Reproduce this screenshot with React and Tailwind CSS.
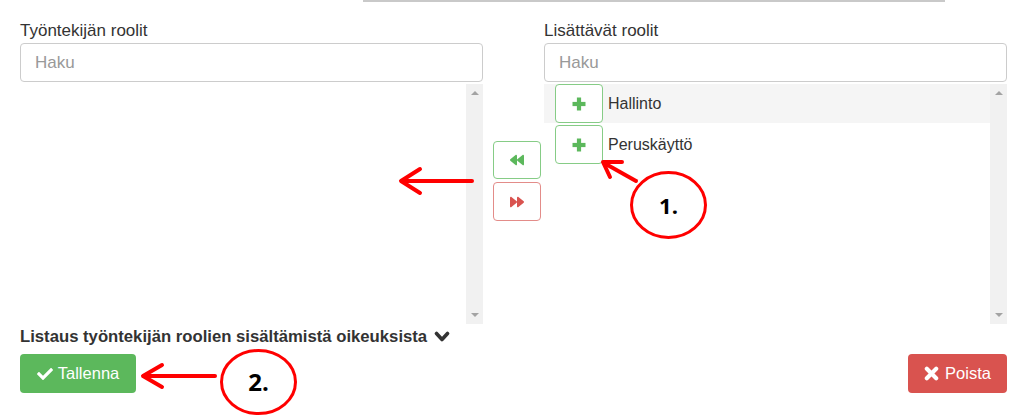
import React from "react";

const font = { fontFamily: '"Liberation Sans", Arial, sans-serif' };

function PlusIcon() {
  return (
    <svg viewBox="0 0 16 16" className="w-[16px] h-[16px]">
      <g stroke="#5cb85c" strokeWidth="4.2" strokeLinecap="butt">
        <line x1="1.5" y1="8" x2="14.5" y2="8" />
        <line x1="8" y1="1.5" x2="8" y2="14.5" />
      </g>
    </svg>
  );
}

function Backward({ color }) {
  return (
    <svg viewBox="0 0 512 512" className="w-[14px] h-[14px]" fill={color}>
      <path d="M11.5 280.6l192 160c20.6 17.2 52.5 2.8 52.5-24.6V96c0-27.4-31.9-41.8-52.5-24.6l-192 160c-15.3 12.8-15.3 36.4 0 49.2zm256 0l192 160c20.6 17.2 52.5 2.8 52.5-24.6V96c0-27.4-31.9-41.8-52.5-24.6l-192 160c-15.3 12.8-15.3 36.4 0 49.2z" />
    </svg>
  );
}

function Forward({ color }) {
  return (
    <svg viewBox="0 0 512 512" className="w-[14px] h-[14px]" fill={color}>
      <path d="M500.5 231.4l-192-160C287.9 54.3 256 68.6 256 96v320c0 27.4 31.9 41.8 52.5 24.6l192-160c15.3-12.8 15.3-36.4 0-49.2zm-256 0l-192-160C31.9 54.3 0 68.6 0 96v320c0 27.4 31.9 41.8 52.5 24.6l192-160c15.3-12.8 15.3-36.4 0-49.2z" />
    </svg>
  );
}

function Scrollbar() {
  return (
    <div className="w-[17px] h-full bg-[#f1f1f1] flex flex-col justify-between items-center py-[7px] shrink-0">
      <div className="w-0 h-0 border-l-[4px] border-r-[4px] border-b-[4px] border-l-transparent border-r-transparent border-b-[#a3a3a3]" />
      <div className="w-0 h-0 border-l-[4px] border-r-[4px] border-t-[4px] border-l-transparent border-r-transparent border-t-[#a3a3a3]" />
    </div>
  );
}

function SearchInput() {
  return (
    <div className="h-[39px] border border-[#cccccc] rounded-[4px] flex items-center pl-[14px] text-[17px] text-[#999999]">
      Haku
    </div>
  );
}

function RoleRow({ name, shaded }) {
  return (
    <div className={"h-[39px] flex items-center " + (shaded ? "bg-[#f5f5f5]" : "bg-white")}>
      <div className="ml-[11px] w-[48px] h-[39px] border border-[#86cc86] rounded-[4px] bg-white flex items-center justify-center">
        <PlusIcon />
      </div>
      <span className="ml-[5px] text-[16px] text-[#333333]">{name}</span>
    </div>
  );
}

export default function App() {
  return (
    <div className="relative w-[1024px] h-[417px] overflow-hidden bg-white" style={font}>
      <div className="ml-[363px] w-[582px] h-[2px] bg-[#c9c9c9]" />
      <div className="flex pl-[20px] pr-[17px] mt-[19px]">
        {/* left column */}
        <div className="w-[463px] flex flex-col">
          <div className="h-[20px] leading-[20px] text-[17px] text-[#333333] mb-[2px]">Työntekijän roolit</div>
          <SearchInput />
          <div className="mt-[2px] h-[240px] flex justify-end">
            <Scrollbar />
          </div>
        </div>
        {/* middle */}
        <div className="w-[61px] flex flex-col pt-[120px] pl-[10px] gap-[3px]">
          <div className="w-[48px] h-[38px] border border-[#86cc86] rounded-[4px] flex items-center justify-center">
            <Backward color="#5cb85c" />
          </div>
          <div className="w-[48px] h-[39px] border border-[#e38c89] rounded-[4px] flex items-center justify-center">
            <Forward color="#d9534f" />
          </div>
        </div>
        {/* right column */}
        <div className="w-[463px] flex flex-col">
          <div className="h-[20px] leading-[20px] text-[17px] text-[#333333] mb-[2px]">Lisättävät roolit</div>
          <SearchInput />
          <div className="mt-[2px] h-[240px] flex">
            <div className="flex-1 flex flex-col gap-[2px]">
              <RoleRow name="Hallinto" shaded />
              <RoleRow name="Peruskäyttö" />
            </div>
            <Scrollbar />
          </div>
        </div>
      </div>

      <div className="pl-[20px] mt-[3px] h-[20px] flex items-center text-[16.7px] font-bold text-[#333333]">
        <span>Listaus työntekijän roolien sisältämistä oikeuksista</span>
        <svg viewBox="0 0 16 12" className="ml-[7px] w-[16px] h-[12px]">
          <polyline points="2.5,2.5 8,8.5 13.5,2.5" fill="none" stroke="#333333" strokeWidth="3.6" strokeLinecap="round" strokeLinejoin="round" />
        </svg>
      </div>

      <div className="flex justify-between pl-[20px] pr-[17px] mt-[7px]">
        <div className="w-[116px] h-[39px] bg-[#5cb85c] rounded-[4px] flex items-center justify-center gap-[5px] text-white text-[16.5px]">
          <svg viewBox="0 0 512 512" className="w-[16px] h-[16px]" fill="#ffffff">
            <path d="M173.898 439.404l-166.4-166.4c-9.997-9.997-9.997-26.206 0-36.204l36.203-36.204c9.997-9.998 26.207-9.998 36.204 0L192 312.69 432.095 72.596c9.997-9.997 26.207-9.997 36.204 0l36.203 36.204c9.997 9.997 9.997 26.206 0 36.204l-294.4 294.401c-9.998 9.997-26.207 9.997-36.204-.001z" />
          </svg>
          <span>Tallenna</span>
        </div>
        <div className="w-[99px] h-[39px] bg-[#d9534f] rounded-[4px] flex items-center justify-center gap-[6px] text-white text-[16.5px]">
          <svg viewBox="0 0 16 16" className="w-[15px] h-[15px]">
            <g stroke="#ffffff" strokeWidth="4.4" strokeLinecap="round">
              <line x1="3" y1="3" x2="13" y2="13" />
              <line x1="13" y1="3" x2="3" y2="13" />
            </g>
          </svg>
          <span>Poista</span>
        </div>
      </div>

      {/* annotations overlay */}
      <svg className="absolute left-0 top-0 pointer-events-none" width="1024" height="417" viewBox="0 0 1024 417">
        <g stroke="#ff0000" strokeWidth="4" fill="none" strokeLinecap="round" strokeLinejoin="round">
          <line x1="472" y1="181" x2="402" y2="181" />
          <polyline points="420,169 401,181 420,193" />
          <line x1="636" y1="181" x2="604" y2="163" />
          <polyline points="622,162 603,162 610,177" />
          <line x1="215" y1="376" x2="144" y2="376" />
          <polyline points="162,365 143,376 162,387" />
        </g>
        <g stroke="#ff0000" strokeWidth="3" fill="none">
          <ellipse cx="668.5" cy="205" rx="37" ry="32.5" />
          <ellipse cx="258.5" cy="382" rx="37" ry="31.5" />
        </g>
      </svg>
      <div className="absolute left-[630px] top-[172px] w-[77px] h-[66px] flex items-center justify-center text-[22px] font-bold text-black" style={{ fontFamily: '"Open Sans", "Liberation Sans", sans-serif' }}>
        1.
      </div>
      <div className="absolute left-[220px] top-[350px] w-[77px] h-[64px] flex items-center justify-center text-[24px] font-bold text-black" style={{ fontFamily: '"Open Sans", "Liberation Sans", sans-serif' }}>
        2.
      </div>
    </div>
  );
}
